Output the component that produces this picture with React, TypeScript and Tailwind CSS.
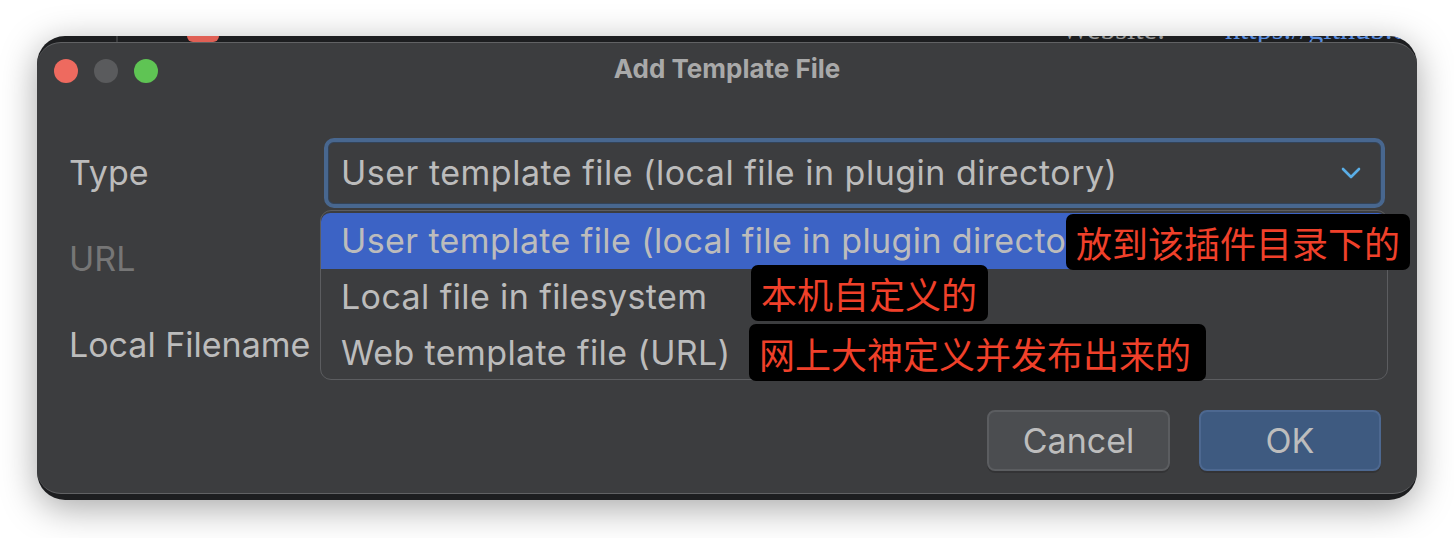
import React from 'react';

const ui = { fontFamily: 'Inter, "Noto Sans", sans-serif' };
const cjk = { fontFamily: '"Noto Sans CJK SC", "Noto Sans", sans-serif' };

function TrafficLights() {
  return (
    <div className="flex items-center gap-4">
      <span className="h-6 w-6 rounded-full bg-[#ee6a5f]" />
      <span className="h-6 w-6 rounded-full bg-[#5a5b5d]" />
      <span className="h-6 w-6 rounded-full bg-[#5fc454]" />
    </div>
  );
}

function Chevron() {
  return (
    <svg width="20" height="14" viewBox="0 0 20 14" fill="none">
      <polyline points="2,3 10,11 18,3" stroke="#5aaee6" strokeWidth="2.6" strokeLinecap="round" strokeLinejoin="round" />
    </svg>
  );
}

// red notes pasted over the screenshot
function Note({ text, className }: { text: string; className: string }) {
  return (
    <div
      className={`absolute flex items-center rounded-[7px] bg-black px-[10px] text-[36px] leading-none text-[#f0402a] ${className}`}
      style={cjk}
    >
      {text}
    </div>
  );
}

const options = [
  'User template file (local file in plugin directory)',
  'Local file in filesystem',
  'Web template file (URL)',
];

export default function App() {
  return (
    <div className="h-[538px] w-[1454px] bg-white pl-[37px] pt-[36px]" style={ui}>
      <div className="flex h-[464px] w-[1380px] flex-col overflow-hidden rounded-[28px] bg-[#1d1e20] shadow-[0_8px_36px_rgba(0,0,0,0.35)]">
        {/* window behind the dialog, only a sliver shows */}
        <div className="relative h-[6px] shrink-0 overflow-hidden">
          <span className="absolute left-[79px] top-0 h-[6px] w-[2px] bg-[#3a3b3d]" />
          <span className="absolute left-[150px] top-[-20px] h-[26px] w-[32px] rounded-[6px] bg-[#e06055]" />
          <span className="absolute left-[1024px] top-[-22px] text-[30px] leading-none text-[#9a9a9a]" style={{ fontFamily: '"Liberation Serif", serif' }}>Website:</span>
          <span className="absolute left-[1188px] top-[-22px] text-[30px] leading-none text-[#5b8fe0]" style={{ fontFamily: '"Liberation Serif", serif' }}>https://github.c</span>
        </div>

        <div className="relative flex flex-1 flex-col rounded-[24px] border-t border-b border-[#616264] bg-[#3c3d3f]">
          {/* title bar */}
          <div className="relative flex h-[56px] shrink-0 items-center pl-[17px]">
            <TrafficLights />
            <div className="absolute inset-x-0 top-[13px] text-center text-[26px] font-bold leading-none text-[#a9a9a9]">
              Add Template File
            </div>
          </div>

          {/* form */}
          <div className="flex flex-col gap-4 pl-[32px] pr-[32px] pt-[39px] text-[34px] text-[#bcbcbc]">
            <div className="flex h-[70px] items-center">
              <div className="w-[255px] shrink-0 leading-none">Type</div>
              <div className="flex h-[70px] flex-1 items-center justify-between rounded-[10px] border-[4px] border-[#48678f] pl-[13px] pr-[20px] shadow-[inset_0_0_0_1px_#33445a]">
                <span className="leading-none tracking-[0.5px]">{options[0]}</span>
                <Chevron />
              </div>
            </div>
            <div className="flex h-[70px] items-center">
              <div className="leading-none text-[#767676]">URL</div>
            </div>
            <div className="flex h-[70px] items-center">
              <div className="leading-none">Local Filename</div>
            </div>
          </div>

          {/* buttons */}
          <div className="mt-[30px] flex justify-end gap-[29px] pr-[36px] text-[34px]">
            <button className="flex h-[61px] w-[183px] items-center justify-center rounded-[8px] border-2 border-[#5b5d60] bg-[#4b4d50] text-[#bdbdbd] shadow-[0_2px_0_rgba(0,0,0,0.15)]">
              Cancel
            </button>
            <button className="flex h-[61px] w-[182px] items-center justify-center rounded-[8px] border-2 border-[#4d6890] bg-[#3e5a80] text-[#bdbdbd] shadow-[0_2px_0_rgba(0,0,0,0.15)]">
              OK
            </button>
          </div>

          {/* open popup of the combo box */}
          <div className="absolute left-[283px] top-[167px] h-[170px] w-[1068px] overflow-hidden rounded-[11px] border border-[#5c5d60] bg-[#3c3d3f] text-[34px] text-[#bcbcbc]">
            {options.map((o, i) => (
              <div
                key={o}
                className={`flex h-[56px] items-center pl-[20px] leading-none tracking-[0.4px] ${i === 0 ? 'mt-[2px] rounded-t-[9px] bg-[#3c63c5]' : ''}`}
              >
                {o}
              </div>
            ))}
          </div>

          <Note text="放到该插件目录下的" className="left-[1029px] top-[171px] h-[56px] w-[344px]" />
          <Note text="本机自定义的" className="left-[714px] top-[222px] h-[56px] w-[237px]" />
          <Note text="网上大神定义并发布出来的" className="left-[712px] top-[281px] h-[57px] w-[457px]" />
        </div>

        <div className="h-[6px] shrink-0" />
      </div>
    </div>
  );
}
